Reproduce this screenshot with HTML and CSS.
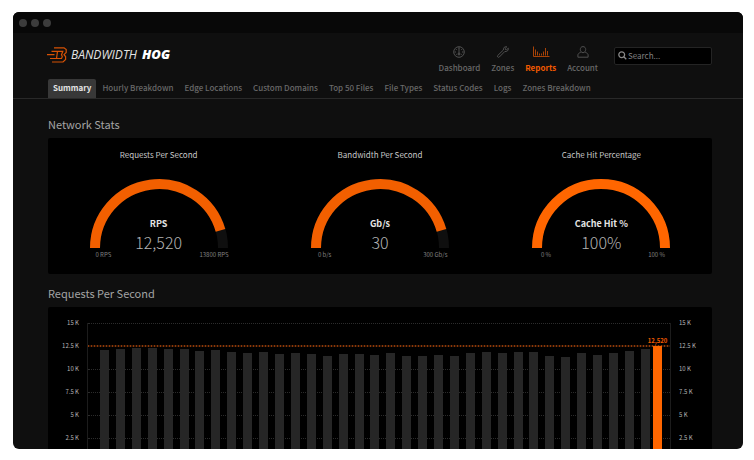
FILE: index.html
```
<!DOCTYPE html>
<html lang="en">
<head>
<meta charset="utf-8">
<title>Bandwidth Hog</title>
<link rel="stylesheet" href="styles.css">
</head>
<body>
<div class="window">
  <div class="titlebar"><i class="dot"></i><i class="dot"></i><i class="dot"></i></div>
  <header class="header">
    <a class="logo" href="#">
      <svg class="logo-mark" viewBox="0 0 20 16" aria-hidden="true"><path d="M7 .8H17L19.200 2.500V5.500L17 7.700L18.600 9.500V12.500L16 15H5M4.500 4.300H15.800L14.500 7.700L15.300 9.500L14.500 11.500H3M10.500 4.300L9.500 11.500M0 7.700H7.500"/></svg>
      <span class="logo-text">BANDWIDTH <b>HOG</b></span>
    </a>
    <nav class="main-nav">
      <a href="#"><svg viewBox="0 0 18 12" aria-hidden="true"><circle cx="9" cy="6" r="5.300"/><path d="M9 2V9M9 1V2.500M4.500 6H6M12 6H13.500M5.800 3L6.700 3.900M12.200 3L11.300 3.900M5.800 9L6.700 8.200M12.200 9L11.300 8.200"/><circle cx="9" cy="8" r="1"/></svg>Dashboard</a>
      <a href="#"><svg viewBox="0 0 18 12" aria-hidden="true"><path d="M12.800 .8C10.800 .3 9 1.800 9.400 4L3.700 9.500C2.800 10.500 4.300 12 5.300 11L10.800 5.500C13 6 14.800 4.200 14.300 2.200L12.700 3.700L11.300 3.400L11.200 2.300Z"/></svg>Zones</a>
      <a class="active" href="#"><svg viewBox="0 0 18 12" aria-hidden="true"><path d="M1.500 .5V10.500H17.500M3.500 3.500V9.500M5.500 5.500V9.500M7.500 7.500V9.500M9.500 7.500V9.500M11.500 5.500V9.500M13.500 2V9.500M15.500 5V9.500"/></svg>Reports</a>
      <a href="#"><svg viewBox="0 0 18 12" aria-hidden="true"><path d="M9 .6C7.200 .6 6.300 1.900 6.300 3.500C6.300 5.200 7.500 6.700 9 6.700S11.700 5.200 11.700 3.500C11.700 1.900 10.800 .6 9 .6ZM6.800 6.200C5 7 3.900 7.800 3.900 9V11.200H14.100V9C14.100 7.800 13 7 11.200 6.200"/></svg>Account</a>
    </nav>
    <label class="search">
      <svg viewBox="0 0 9 9" aria-hidden="true"><circle cx="3.700" cy="3.700" r="2.900"/><path d="M5.800 5.800L8.300 8.300"/></svg>
      <input type="search" placeholder="Search..." aria-label="Search">
    </label>
  </header>
  <nav class="tabs">
    <a class="active" href="#">Summary</a>
    <a href="#">Hourly Breakdown</a>
    <a href="#">Edge Locations</a>
    <a href="#">Custom Domains</a>
    <a href="#">Top 50 Files</a>
    <a href="#">File Types</a>
    <a href="#">Status Codes</a>
    <a href="#">Logs</a>
    <a href="#">Zones Breakdown</a>
  </nav>
  <main class="content">
    <h2>Network Stats</h2>
    <section class="panel gauges">
      <article class="gauge">
        <h3>Requests Per Second</h3>
        <div class="dial">
          <svg viewBox="0 0 138 69" aria-hidden="true"><path class="track" d="M5 69A64 64 0 0 1 133 69"/><path class="fill" d="M5 69A64 64 0 0 1 130.500 51.400"/></svg>
          <div class="reading"><strong>RPS</strong><span>12,520</span></div>
        </div>
        <div class="limits"><span>0 RPS</span><span>13800 RPS</span></div>
      </article>
      <article class="gauge">
        <h3>Bandwidth Per Second</h3>
        <div class="dial">
          <svg viewBox="0 0 138 69" aria-hidden="true"><path class="track" d="M5 69A64 64 0 0 1 133 69"/><path class="fill" d="M5 69A64 64 0 0 1 130.500 51.400"/></svg>
          <div class="reading"><strong>Gb/s</strong><span>30</span></div>
        </div>
        <div class="limits"><span>0 b/s</span><span>300 Gb/s</span></div>
      </article>
      <article class="gauge">
        <h3>Cache Hit Percentage</h3>
        <div class="dial">
          <svg viewBox="0 0 138 69" aria-hidden="true"><path class="fill full" d="M5 69A64 64 0 0 1 133 69"/></svg>
          <div class="reading"><strong>Cache Hit %</strong><span>100%</span></div>
        </div>
        <div class="limits"><span>0 %</span><span>100 %</span></div>
      </article>
    </section>
    <h2>Requests Per Second</h2>
    <section class="panel chart">
      <div class="axis left"><span>15 K</span><span>12.5 K</span><span>10 K</span><span>7.5 K</span><span>5 K</span><span>2.5 K</span></div>
      <div class="plot">
        <div class="grid"><i></i><i class="peak"></i><i></i><i></i><i></i><i></i></div>
        <div class="bars">
          <div class="history">
            <i style="height:111px"></i><i style="height:112px"></i><i style="height:113px"></i><i style="height:113px"></i><i style="height:112px"></i><i style="height:112px"></i><i style="height:110px"></i><i style="height:111px"></i><i style="height:109px"></i><i style="height:108px"></i><i style="height:109px"></i><i style="height:107px"></i><i style="height:108px"></i><i style="height:107px"></i><i style="height:105px"></i><i style="height:107px"></i><i style="height:107px"></i><i style="height:106px"></i><i style="height:108px"></i><i style="height:105px"></i><i style="height:105px"></i><i style="height:106px"></i><i style="height:105px"></i><i style="height:108px"></i><i style="height:109px"></i><i style="height:108px"></i><i style="height:109px"></i><i style="height:109px"></i><i style="height:105px"></i><i style="height:104px"></i><i style="height:108px"></i><i style="height:106px"></i><i style="height:108px"></i><i style="height:110px"></i><i style="height:112px"></i>
          </div>
          <div class="current" style="height:115px"><b>12,520</b></div>
        </div>
      </div>
      <div class="axis right"><span>15 K</span><span>12.5 K</span><span>10 K</span><span>7.5 K</span><span>5 K</span><span>2.5 K</span></div>
    </section>
  </main>
</div>
</body>
</html>
```

FILE: styles.css
```
* { box-sizing: border-box; }
body {
  margin: 0;
  padding: 12px 11px 11px 13px;
  height: 100vh;
  background: #fff;
  color: #b4b4b4;
  font-family: "Noto Sans CJK SC", "Open Sans", sans-serif;
  font-size: 9px;
  line-height: 12px;
}
a { color: inherit; text-decoration: none; }
.window {
  height: 100%;
  overflow: hidden;
  border-radius: 6px;
  background: #0f0f0f;
}
.titlebar {
  display: flex;
  align-items: center;
  gap: 4px;
  height: 21px;
  padding-left: 6px;
  background: #080808;
}
.dot { width: 8px; height: 8px; border-radius: 50%; background: #3c3c3c; }

.header {
  display: flex;
  align-items: flex-start;
  height: 46px;
  padding: 13px 31px 0 34px;
}
.logo { display: flex; align-items: center; gap: 4px; margin-right: auto; }
.logo-mark { width: 20px; height: 16px; fill: none; stroke: #d65205; stroke-width: 1.2; }
.logo-text {
  display: flex;
  align-items: baseline;
  gap: 5px;
  color: #e4e4e4;
  font: italic 400 12px/16px "Open Sans", sans-serif;
}
.logo-text b { color: #fff; font-size: 13px; font-weight: 800; }
.main-nav { display: flex; gap: 11px; color: #696969; font-weight: 500; font-size: 8px; }
.main-nav a { display: flex; flex-direction: column; align-items: center; gap: 4px; }
.main-nav svg { width: 18px; height: 12px; fill: none; stroke: #505050; stroke-width: 1; }
.main-nav .active { color: #f25a00; font-weight: 700; }
.main-nav .active svg { stroke: #a84307; }
.search { position: relative; display: block; margin: 1px 0 0 16px; }
.search svg {
  position: absolute;
  left: 4px;
  top: 4px;
  width: 9px;
  height: 9px;
  fill: none;
  stroke: #888;
  stroke-width: 1.3;
}
.search input {
  display: block;
  width: 98px;
  height: 18px;
  padding: 0 4px 1px 13px;
  border: 1px solid #242424;
  border-radius: 2px;
  background: #000;
  color: #888;
  font: inherit;
  font-size: 8px;
}
.search input::placeholder { color: #808080; }

.tabs {
  display: flex;
  gap: 1px;
  padding-left: 35px;
  border-bottom: 1px solid #292929;
  color: #696969;
  font-size: 8px;
  font-weight: 500;
  white-space: nowrap;
}
.tabs a { padding: 3px 5px 4px; }
.tabs .active {
  border-radius: 2px 2px 0 0;
  background: #383838;
  color: #e4e4e4;
  font-weight: 700;
}

.content { padding: 16px 31px 0 35px; }
h2 {
  margin: 0 0 5px;
  color: #a4a4a4;
  font-size: 11px;
  font-weight: 400;
  line-height: 18px;
}
.panel { border-radius: 2px; background: #000; }
.gauges { display: grid; grid-template-columns: repeat(3, 1fr); margin-bottom: 10px; height: 136px; }
.gauge { padding-top: 10px; text-align: center; }
h3 { margin: 0; color: #c8c8c8; font-size: 8px; font-weight: 400; line-height: 13px; }
.dial {
  display: grid;
  justify-content: center;
  height: 69px;
  margin-top: 18px;
}
.dial > * { grid-area: 1 / 1; }
.dial svg { width: 138px; height: 69px; fill: none; stroke-width: 10; }
.track { stroke: #0f0f0f; }
.fill { stroke: #f25f00; }
.full { stroke: #ff6600; }
.reading { display: flex; flex-direction: column; padding-top: 38px; }
.reading strong { color: #e4e4e4; font-size: 9px; line-height: 14px; }
.reading span { color: #b4b4b4; font-size: 16px; font-weight: 300; line-height: 22px; }
.limits { display: grid; grid-template-columns: 1fr 1fr; color: #808080; font-size: 6px; line-height: 13px; }

.chart {
  display: grid;
  grid-template-columns: 31px 1fr 33px;
  gap: 8px;
  padding-top: 16px;
}
.axis {
  display: flex;
  flex-direction: column;
  margin-top: -12px;
  color: #b4b4b4;
  font-size: 6px;
  line-height: 23px;
}
.left { text-align: right; }
.plot {
  display: grid;
  height: 138px;
  border: 0 solid #1c1c1c;
  border-width: 0 1px;
}
.plot > * { grid-area: 1 / 1; }
.grid { display: grid; grid-template-rows: repeat(6, 23px); }
.grid i { border-top: 1px dotted #2c2c2c; }
.grid .peak {
  height: 2px;
  border: 0;
  margin-top: -1px;
  background: repeating-linear-gradient(to right, #8a3808 0 1px, #2c1204 1px 3px);
}
.bars { display: flex; align-items: flex-end; gap: 3px; padding: 0 8px 0 12px; }
.history { flex: 1; display: flex; align-items: flex-end; justify-content: space-between; }
.history i { width: 9px; background: #262626; }
.current { position: relative; width: 9px; background: #ff6600; }
.current b {
  position: absolute;
  bottom: 100%;
  left: 50%;
  transform: translateX(-50%);
  color: #f25a00;
  font-size: 6px;
  line-height: 10px;
}
```
